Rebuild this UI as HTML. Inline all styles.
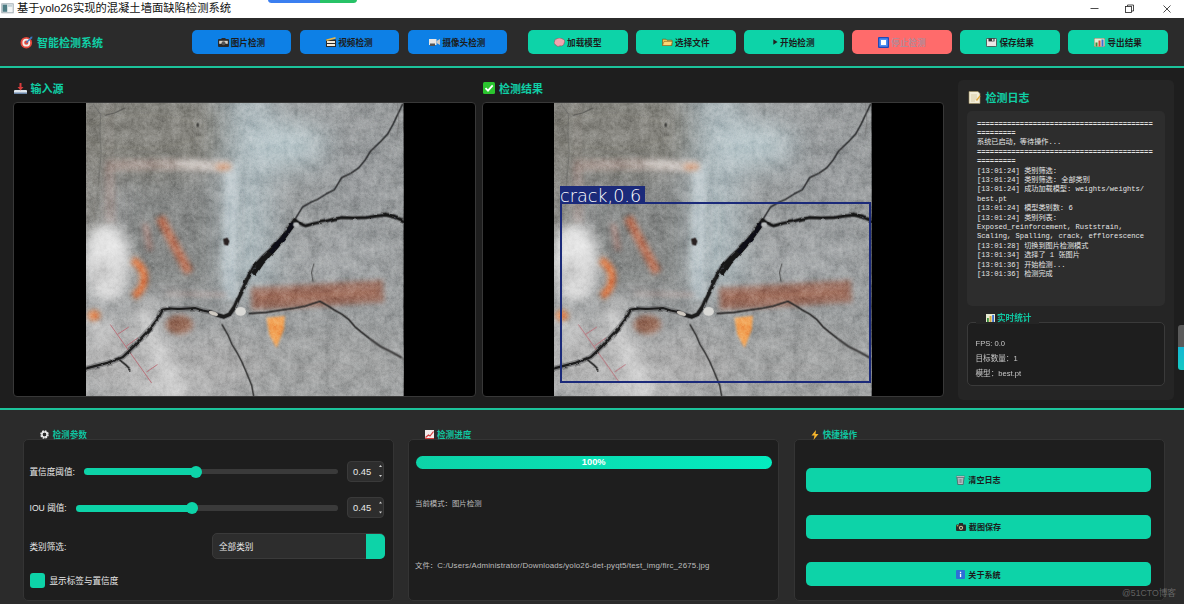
<!DOCTYPE html>
<html lang="zh-CN">
<head>
<meta charset="utf-8">
<title>基于yolo26实现的混凝土墙面缺陷检测系统</title>
<style>
*{box-sizing:border-box;margin:0;padding:0}
html,body{width:1184px;height:604px;overflow:hidden;background:#1e1e1e}
body{position:relative;font-family:"Liberation Sans","Noto Sans CJK SC",sans-serif;color:#e6e6e6}
.abs{position:absolute}
#titlebar{left:0;top:0;width:1184px;height:18px;background:#fff}
#titletext{left:17px;top:0;height:17px;line-height:17px;font-size:11.3px;color:#111;white-space:nowrap}
#header{left:0;top:18px;width:1184px;height:48px;background:#2b2b2b}
.tline{left:0;width:1184px;height:2px;background:#1cc39b}
#logo{left:37px;top:34px;height:19px;line-height:19px;font-size:11px;font-weight:bold;color:#10cfa6;white-space:nowrap}
.btn{top:30px;height:24px;width:99.600px;border-radius:5px;background:#0dd3a8;color:#1c1c1c;font-size:8.6px;font-weight:bold;
 display:flex;align-items:center;justify-content:center;white-space:nowrap}
.btn.blue{background:#0d80e6}
.btn.red{background:#ff6b6b;color:#b48a98}
.btn svg{margin-right:2px;flex:none}
.sec{height:16px;line-height:16px;font-size:11px;font-weight:bold;color:#10cfa6;white-space:nowrap}
.panel{top:102px;height:294.700px;background:#000;border-radius:4px;overflow:hidden;border:1px solid #383838}
#bottom{left:0;top:408px;width:1184px;height:196px;background:#2b2b2b}
.grp{top:439px;height:162px;background:#1e1e1e;border:1px solid #343434;border-radius:5px}
.gtitle{height:12px;line-height:12px;font-size:8.6px;font-weight:bold;color:#10c5a0;white-space:nowrap}
.lbl{font-size:8.6px;color:#e8e8e8;white-space:nowrap;height:12px;line-height:12px}
.small{font-size:7.4px;color:#bdbdbd;white-space:nowrap;height:12px;line-height:12px}
.track{height:5.600px;border-radius:2.800px;background:#3a3a3a;margin-top:0.700px}
.fill{height:7px;border-radius:3.5px;background:#0dd3a8}
.knob{width:12px;height:12px;border-radius:6px;background:#0dd3a8}
.spin{width:37px;height:21px;border-radius:4px;background:#2d2d2d;border:1px solid #3a3a3a;font-size:9.400px;color:#e8e8e8;line-height:20px;padding-left:5px}
.qbtn{left:806px;width:345px;height:24px;border-radius:5px;background:#0dd3a8;color:#1c1c1c;font-size:8.1px;font-weight:bold;
 display:flex;align-items:center;justify-content:center;white-space:nowrap}
.qbtn svg{margin-right:3px;flex:none}
#log{left:967px;top:111px;width:198px;height:195px;background:#2d2d2d;border-radius:5px;
 font-family:"Liberation Mono","Noto Sans CJK SC",monospace;font-size:7.15px;line-height:9.4px;color:#e6e6e6;
 padding:8.500px 0 0 10px;white-space:pre;overflow:hidden}
</style>
</head>
<body>
<!-- window title bar -->
<div id="titlebar" class="abs"></div>
<svg class="abs" style="left:1px;top:3px" width="13" height="11" viewBox="0 0 13 11"><rect x="0.800" y="0.800" width="11.400" height="9" fill="#f3f6f7" stroke="#9aa7ad" stroke-width="0.900"/><rect x="1.600" y="1.600" width="4.600" height="7.200" fill="#4d7c84"/><rect x="6.800" y="1.600" width="4.600" height="2.200" fill="#c5d3d8"/></svg>
<div id="titletext" class="abs">基于yolo26实现的混凝土墙面缺陷检测系统</div>
<div class="abs" style="left:268px;top:-4px;width:89px;height:7px;border-radius:4px;background:linear-gradient(90deg,#3b7ff0 0,#3b7ff0 58%,#27c267 58%)"></div>
<svg class="abs" style="left:1088px;top:3px" width="88" height="12" viewBox="0 0 88 12" fill="none" stroke="#2a2a2a" stroke-width="0.850"><path d="M2.500 5.500h8"/><rect x="37.5" y="3.5" width="6" height="6"/><path d="M39.5 3.5v-1.5h6v6h-2"/><path d="M75.500 2.500l7 7m0-7l-7 7"/></svg>

<!-- header -->
<div id="header" class="abs"></div>
<div class="abs tline" style="top:66px"></div>
<svg class="abs" style="left:20px;top:36px" width="13" height="13" viewBox="0 0 13 13"><circle cx="6.300" cy="6.700" r="5.800" fill="#e5483c"/><circle cx="6.300" cy="6.700" r="3.900" fill="#f3efe9"/><circle cx="6.300" cy="6.700" r="2.100" fill="#e5483c"/><path d="M6.300 6.700L11.500 1.500" stroke="#3a78c2" stroke-width="1.400"/><path d="M10 1l2.500 -0.500l-0.500 2.500z" fill="#3a78c2"/></svg>
<div id="logo" class="abs">智能检测系统</div>

<div class="abs btn blue" style="left:191.600px"><svg width="11" height="9" viewBox="0 0 11 9"><rect x="0" y="1" width="11" height="8" rx="1" fill="#2a2a2a"/><rect x="1.200" y="2.800" width="8.600" height="3" fill="#d9d2c6"/><circle cx="5.500" cy="5.200" r="2" fill="#555"/><rect x="3.500" y="0" width="4" height="1.500" fill="#2a2a2a"/></svg>图片检测</div>
<div class="abs btn blue" style="left:299.600px"><svg width="10" height="10" viewBox="0 0 10 10"><rect x="0" y="2.500" width="10" height="7.500" fill="#2a2a2a"/><rect x="1" y="4" width="8" height="2" fill="#f1e9d8"/><rect x="1" y="7" width="8" height="2" fill="#f1e9d8"/><path d="M0 2.500L9.500 0v1.800L0.500 4z" fill="#e8b84a"/></svg>视频检测</div>
<div class="abs btn blue" style="left:407.600px"><svg width="11" height="8" viewBox="0 0 11 8"><path d="M0 1h7.500v6H0z" fill="#e9e6e2"/><path d="M7.500 3L11 1v6L7.500 5z" fill="#cfcac4"/><rect x="1" y="5.500" width="5" height="2.500" fill="#555"/></svg>摄像头检测</div>
<div class="abs btn" style="left:528px"><svg width="11" height="9" viewBox="0 0 11 9"><path d="M2.500 1C4 -0.300 7 -0.300 8.500 1C10.500 1.300 11.300 3.500 10.200 5C10 7 8 8.500 6 7.800C4.500 9 2.500 8.300 2 7C0 6.500 -0.500 4 0.800 3C0.500 2 1.300 1 2.500 1z" fill="#f2a3ae" stroke="#8c5560" stroke-width="0.600"/></svg>加载模型</div>
<div class="abs btn" style="left:636px"><svg width="11" height="8" viewBox="0 0 11 8"><path d="M0.500 1.200h3.500l1 1h5v5.300h-9.500z" fill="#f6c453" stroke="#7a5a1c" stroke-width="0.700"/><path d="M0.500 7.500l1.500-4h8.500l-1.500 4z" fill="#fbd774" stroke="#7a5a1c" stroke-width="0.500"/></svg>选择文件</div>
<div class="abs btn" style="left:744px"><svg width="5" height="6" viewBox="0 0 5 6"><path d="M0.300 0.300L4.600 3L0.300 5.700z" fill="#222"/></svg>开始检测</div>
<div class="abs btn red" style="left:852px"><svg width="11" height="11" viewBox="0 0 11 11"><rect x="0" y="0" width="11" height="11" rx="1" fill="#2148b8"/><rect x="1.300" y="1.300" width="8.400" height="8.400" fill="#4f8ef0"/><rect x="3" y="3" width="5" height="5" fill="#fff"/></svg>停止检测</div>
<div class="abs btn" style="left:960.400px"><svg width="11" height="9" viewBox="0 0 11 9"><rect x="0.400" y="0.400" width="10.200" height="8.200" rx="1" fill="#ebe6e6" stroke="#333" stroke-width="0.800"/><rect x="2.500" y="0.400" width="6" height="3" fill="#333"/><rect x="6" y="0.900" width="1.500" height="2" fill="#ddd"/></svg>保存结果</div>
<div class="abs btn" style="left:1068.400px"><svg width="11" height="9" viewBox="0 0 11 9"><rect x="0" y="0" width="11" height="9" fill="#e6ead2" stroke="#5a6a4a" stroke-width="0.800"/><rect x="1.500" y="4.500" width="2" height="4" fill="#3d8f3d"/><rect x="4.500" y="2.500" width="2" height="6" fill="#d9483a"/><rect x="7.500" y="1.500" width="2" height="7" fill="#3c6fd0"/></svg>导出结果</div>

<!-- section labels -->
<svg class="abs" style="left:14px;top:82px" width="13" height="12" viewBox="0 0 13 12"><rect x="0" y="8" width="13" height="4" rx="1" fill="#dfe6ee"/><rect x="0" y="10.500" width="13" height="1.500" fill="#6b86a8"/><path d="M5.500 1h2v4h2L6.500 8.500L3.500 5h2z" fill="#d63c3c"/></svg>
<div class="abs sec" style="left:30.500px;top:80.500px">输入源</div>
<svg class="abs" style="left:483px;top:82px" width="12" height="12" viewBox="0 0 12 12"><rect width="12" height="12" rx="1.500" fill="#2bc52f"/><path d="M2.500 6.200L5 8.700L9.700 3.300" stroke="#fff" stroke-width="1.800" fill="none"/></svg>
<div class="abs sec" style="left:499px;top:80.500px">检测结果</div>

<!-- image panels -->
<div class="abs panel" id="p1" style="left:13px;width:463px"><svg class="abs" style="left:72px;top:-1px" width="317.500" height="294.200" viewBox="0 0 653 604" preserveAspectRatio="none"><filter id="b30" x="-30%" y="-30%" width="160%" height="160%"><feGaussianBlur stdDeviation="28"/></filter>
<filter id="b14" x="-30%" y="-30%" width="160%" height="160%"><feGaussianBlur stdDeviation="13"/></filter>
<filter id="b6" x="-30%" y="-30%" width="160%" height="160%"><feGaussianBlur stdDeviation="6"/></filter>
<filter id="b3" x="-30%" y="-30%" width="160%" height="160%"><feGaussianBlur stdDeviation="2.600"/></filter>
<filter id="b1" x="-10%" y="-10%" width="120%" height="120%"><feGaussianBlur stdDeviation="1"/></filter>
<filter id="nzf" color-interpolation-filters="sRGB" x="0" y="0" width="100%" height="100%"><feTurbulence type="fractalNoise" baseFrequency="0.9" numOctaves="2" seed="7"/><feColorMatrix type="matrix" values="0 0 0 1.6 -0.300  0 0 0 1.6 -0.300  0 0 0 1.6 -0.300  0 0 0 0 1"/></filter>
<filter id="nzc" color-interpolation-filters="sRGB" x="0" y="0" width="100%" height="100%"><feTurbulence type="fractalNoise" baseFrequency="0.035" numOctaves="3" seed="11"/><feColorMatrix type="matrix" values="0 0 0 1.5 -0.250  0 0 0 1.5 -0.250  0 0 0 1.5 -0.250  0 0 0 0 1"/></filter>
<filter id="nzm" color-interpolation-filters="sRGB" x="0" y="0" width="100%" height="100%"><feTurbulence type="fractalNoise" baseFrequency="0.14" numOctaves="2" seed="23"/><feColorMatrix type="matrix" values="0 0 0 1.5 -0.250  0 0 0 1.5 -0.250  0 0 0 1.5 -0.250  0 0 0 0 1"/></filter>
<filter id="rough" x="-5%" y="-5%" width="110%" height="110%"><feTurbulence type="fractalNoise" baseFrequency="0.05" numOctaves="2" seed="4" result="t"/><feDisplacementMap in="SourceGraphic" in2="t" scale="6" xChannelSelector="R" yChannelSelector="G"/></filter>
<rect width="653" height="604" fill="#9b9e9f"/>
<g filter="url(#b30)">
<ellipse cx="120" cy="60" rx="210" ry="100" fill="#86857f"/>
<rect x="-20" y="-20" width="58" height="300" fill="#85837d"/>
<rect x="285" y="-30" width="100" height="420" fill="#aebabe"/>
<ellipse cx="413" cy="88" rx="85" ry="48" fill="#bccbcf"/>
<rect x="75" y="165" width="195" height="225" fill="#858786"/>
<ellipse cx="560" cy="160" rx="90" ry="120" fill="#999c9e"/>
<ellipse cx="520" cy="330" rx="120" ry="60" fill="#a4a7a9"/>
<ellipse cx="480" cy="545" rx="200" ry="80" fill="#a3a4a4"/>
<ellipse cx="250" cy="545" rx="110" ry="75" fill="#adadad"/>
<ellipse cx="85" cy="530" rx="120" ry="85" fill="#b6b6b6"/>
<ellipse cx="170" cy="610" rx="60" ry="50" fill="#c6c6c6"/>
</g>
<g filter="url(#b14)">
</g><g filter="url(#b6)">
<path d="M40 130 L180 128 L300 133" stroke="#c4aca4" stroke-width="24" fill="none" opacity="0.5"/>
<path d="M185 127 L300 133" stroke="#dedad6" stroke-width="20" fill="none" opacity="0.7"/>
<path d="M300 128 L297 250 L294 330 L298 405" stroke="#c8d3d7" stroke-width="30" fill="none" opacity="0.7"/>
<path d="M48 135 L50 250" stroke="#b8a29c" stroke-width="22" fill="none" opacity="0.45"/>
<path d="M165 393 L290 396" stroke="#c2aca5" stroke-width="9" fill="none" opacity="0.55"/>
</g><g filter="url(#b14)">
<ellipse cx="44" cy="332" rx="50" ry="84" fill="#dadada"/>
<ellipse cx="40" cy="290" rx="36" ry="40" fill="#e8e8e8" opacity="0.85"/><ellipse cx="28" cy="352" rx="16" ry="20" fill="#b0b0b0" opacity="0.7"/>
<path d="M0 450 L50 480" stroke="#d0d0d0" stroke-width="50" fill="none" opacity="0.7"/><path d="M110 410 L150 520 L185 604" stroke="#d6d6d6" stroke-width="40" fill="none" opacity="0.75"/>
<path d="M100 430 L190 380" stroke="#b5b5b5" stroke-width="30" fill="none" opacity="0.6"/>
</g>
<g filter="url(#b6)">
<path d="M340 404 L470 397 L612 388" stroke="#98634f" stroke-width="46" fill="none" opacity="0.8"/>
<path d="M350 402 L600 390" stroke="#aa7560" stroke-width="18" fill="none" opacity="0.55"/>
<ellipse cx="192" cy="457" rx="28" ry="20" fill="#97634d" opacity="0.85"/>
<path d="M152 236 L180 290 L212 350" stroke="#c97b5c" stroke-width="19" fill="none" opacity="0.88"/>
<path d="M122 250 L132 305" stroke="#b98f85" stroke-width="12" fill="none" opacity="0.7"/>
<path d="M96 324 Q128 345 116 378 Q110 392 98 398" stroke="#e37c45" stroke-width="15" fill="none"/>
<ellipse cx="16" cy="438" rx="13" ry="11" fill="#e28a55"/>
<ellipse cx="283" cy="133" rx="17" ry="8" fill="#dba27e" opacity="0.75"/>
</g>
<g filter="url(#b3)">
<path d="M371 443 L409 439 L407 467 L392 505 L377 478 Z" fill="#f2a558"/>
</g>
<rect width="653" height="604" filter="url(#nzc)" opacity="0.32" style="mix-blend-mode:soft-light"/>
<rect width="653" height="604" filter="url(#nzm)" opacity="0.2" style="mix-blend-mode:soft-light"/>
<rect width="653" height="604" filter="url(#nzf)" opacity="0.16" style="mix-blend-mode:soft-light"/>
<g stroke="#b96a74" stroke-width="2" fill="none" opacity="0.9"><path d="M50 457 L135 577"/><path d="M65 477 L88 462"/><path d="M82 502 L107 484"/><path d="M125 554 L147 539"/></g>
<g fill="none" stroke-linejoin="round" stroke-linecap="round" filter="url(#b1)">
<polyline points="429,242 446,215 462,206 476,200 495,188 511,180 520,165 526,155 545,146 561,135 575,118 586,100 605,82 621,65 632,45 639,30 651,5" stroke="#2c2d2f" stroke-width="3.200"/>
<polyline points="336,434 370,432 401,427 430,423 451,419 481,409 497,418 511,427 527,436 541,447 553,461 566,472 585,487 606,502 628,513 648,524" stroke="#262525" stroke-width="3.300"/>
<polyline points="585,487 606,502 628,513 653,527" stroke="#555" stroke-width="6" opacity="0.5"/>
<polyline points="280,457 292,478 300,497 311,515 320,532 330,555 341,582 345,604" stroke="#2e2e2e" stroke-width="3"/>
<polyline points="469,332 464,350 467,368" stroke="#4a4a4a" stroke-width="2"/>
<polyline points="15,5 30,25 28,65 31,100 26,165" stroke="#6a6a66" stroke-width="2" opacity="0.8"/>
<polyline points="40,27 60,22 80,12" stroke="#555552" stroke-width="2.200" opacity="0.8"/>
<polyline points="640,0 644,40 640,70" stroke="#6a6a6a" stroke-width="2" opacity="0.6"/>
</g>
<g fill="none" stroke-linejoin="round" stroke-linecap="round" filter="url(#rough)">
<polyline points="0,547 22,541 50,534 75,524 88,512 100,500 112,486 125,472 138,457 150,442 158,426 172,424 190,425 210,424 225,423 240,428 255,431 270,437 283,441 295,436 306,420 314,402 326,377 336,355 346,337 362,320 381,302 396,286 411,268 420,254 429,242" stroke="#4a4a4c" stroke-width="11" opacity="0.45"/>
<polyline points="0,547 22,541 50,534 75,524 88,512 100,500 112,486 125,472 138,457 150,442 158,426 172,424" stroke="#1c1c1d" stroke-width="4.800"/>
<polyline points="172,424 190,425 210,424 225,423 240,428 255,431" stroke="#1c1c1d" stroke-width="4"/>
<polyline points="255,431 270,437 283,441 295,436 306,420 314,402 326,377 336,355" stroke="#1a1a1b" stroke-width="7.500"/>
<polyline points="336,355 346,337 362,320 381,302 396,286 411,268 420,254 429,242" stroke="#141415" stroke-width="6"/>
<path d="M376 309 L394 285 L411 263 L424 245 L431 242 L433 250 L424 262 L411 280 L396 299 L382 315 Z" fill="#111112"/>
<path d="M342 350 L360 322 L376 308 L382 314 L366 332 L349 357 Z" fill="#151516"/>
<polyline points="429,242 440,250 452,254 470,249 491,245 510,240 526,237 550,238 576,237 598,234 616,232 634,236 653,244" stroke="#4a4a4c" stroke-width="9" opacity="0.4"/>
<polyline points="429,242 440,250 452,254 470,249 491,245 510,240 526,237 550,238 576,237 598,234 616,232 634,236 653,244" stroke="#151516" stroke-width="5.500"/>
<polyline points="70,530 82,540 92,550" stroke="#1c1c1c" stroke-width="3.500"/>
</g>
<g filter="url(#b1)">
<ellipse cx="318" cy="430" rx="11" ry="9" fill="#d9d9d6"/>
<ellipse cx="262" cy="434" rx="10" ry="4" fill="#cfcac2" transform="rotate(20 262 434)"/>
<ellipse cx="432" cy="252" rx="6" ry="5" fill="#b9bcbd"/>
<path d="M282 281 l9 -3 l4 8 l-3 9 l-8 -2 z" fill="#2a2322"/>
<ellipse cx="230" cy="47" rx="2.500" ry="4.500" fill="#3a3a38"/>
</g></svg></div>
<div class="abs panel" id="p2" style="left:482px;width:462px"><svg class="abs" style="left:71px;top:-1px" width="317.500" height="294.200" viewBox="0 0 653 604" preserveAspectRatio="none"><rect width="653" height="604" fill="#9b9e9f"/>
<g filter="url(#b30)">
<ellipse cx="120" cy="60" rx="210" ry="100" fill="#86857f"/>
<rect x="-20" y="-20" width="58" height="300" fill="#85837d"/>
<rect x="285" y="-30" width="100" height="420" fill="#aebabe"/>
<ellipse cx="413" cy="88" rx="85" ry="48" fill="#bccbcf"/>
<rect x="75" y="165" width="195" height="225" fill="#858786"/>
<ellipse cx="560" cy="160" rx="90" ry="120" fill="#999c9e"/>
<ellipse cx="520" cy="330" rx="120" ry="60" fill="#a4a7a9"/>
<ellipse cx="480" cy="545" rx="200" ry="80" fill="#a3a4a4"/>
<ellipse cx="250" cy="545" rx="110" ry="75" fill="#adadad"/>
<ellipse cx="85" cy="530" rx="120" ry="85" fill="#b6b6b6"/>
<ellipse cx="170" cy="610" rx="60" ry="50" fill="#c6c6c6"/>
</g>
<g filter="url(#b14)">
</g><g filter="url(#b6)">
<path d="M40 130 L180 128 L300 133" stroke="#c4aca4" stroke-width="24" fill="none" opacity="0.5"/>
<path d="M185 127 L300 133" stroke="#dedad6" stroke-width="20" fill="none" opacity="0.7"/>
<path d="M300 128 L297 250 L294 330 L298 405" stroke="#c8d3d7" stroke-width="30" fill="none" opacity="0.7"/>
<path d="M48 135 L50 250" stroke="#b8a29c" stroke-width="22" fill="none" opacity="0.45"/>
<path d="M165 393 L290 396" stroke="#c2aca5" stroke-width="9" fill="none" opacity="0.55"/>
</g><g filter="url(#b14)">
<ellipse cx="44" cy="332" rx="50" ry="84" fill="#dadada"/>
<ellipse cx="40" cy="290" rx="36" ry="40" fill="#e8e8e8" opacity="0.85"/><ellipse cx="28" cy="352" rx="16" ry="20" fill="#b0b0b0" opacity="0.7"/>
<path d="M0 450 L50 480" stroke="#d0d0d0" stroke-width="50" fill="none" opacity="0.7"/><path d="M110 410 L150 520 L185 604" stroke="#d6d6d6" stroke-width="40" fill="none" opacity="0.75"/>
<path d="M100 430 L190 380" stroke="#b5b5b5" stroke-width="30" fill="none" opacity="0.6"/>
</g>
<g filter="url(#b6)">
<path d="M340 404 L470 397 L612 388" stroke="#98634f" stroke-width="46" fill="none" opacity="0.8"/>
<path d="M350 402 L600 390" stroke="#aa7560" stroke-width="18" fill="none" opacity="0.55"/>
<ellipse cx="192" cy="457" rx="28" ry="20" fill="#97634d" opacity="0.85"/>
<path d="M152 236 L180 290 L212 350" stroke="#c97b5c" stroke-width="19" fill="none" opacity="0.88"/>
<path d="M122 250 L132 305" stroke="#b98f85" stroke-width="12" fill="none" opacity="0.7"/>
<path d="M96 324 Q128 345 116 378 Q110 392 98 398" stroke="#e37c45" stroke-width="15" fill="none"/>
<ellipse cx="16" cy="438" rx="13" ry="11" fill="#e28a55"/>
<ellipse cx="283" cy="133" rx="17" ry="8" fill="#dba27e" opacity="0.75"/>
</g>
<g filter="url(#b3)">
<path d="M371 443 L409 439 L407 467 L392 505 L377 478 Z" fill="#f2a558"/>
</g>
<rect width="653" height="604" filter="url(#nzc)" opacity="0.32" style="mix-blend-mode:soft-light"/>
<rect width="653" height="604" filter="url(#nzm)" opacity="0.2" style="mix-blend-mode:soft-light"/>
<rect width="653" height="604" filter="url(#nzf)" opacity="0.16" style="mix-blend-mode:soft-light"/>
<g stroke="#b96a74" stroke-width="2" fill="none" opacity="0.9"><path d="M50 457 L135 577"/><path d="M65 477 L88 462"/><path d="M82 502 L107 484"/><path d="M125 554 L147 539"/></g>
<g fill="none" stroke-linejoin="round" stroke-linecap="round" filter="url(#b1)">
<polyline points="429,242 446,215 462,206 476,200 495,188 511,180 520,165 526,155 545,146 561,135 575,118 586,100 605,82 621,65 632,45 639,30 651,5" stroke="#2c2d2f" stroke-width="3.200"/>
<polyline points="336,434 370,432 401,427 430,423 451,419 481,409 497,418 511,427 527,436 541,447 553,461 566,472 585,487 606,502 628,513 648,524" stroke="#262525" stroke-width="3.300"/>
<polyline points="585,487 606,502 628,513 653,527" stroke="#555" stroke-width="6" opacity="0.5"/>
<polyline points="280,457 292,478 300,497 311,515 320,532 330,555 341,582 345,604" stroke="#2e2e2e" stroke-width="3"/>
<polyline points="469,332 464,350 467,368" stroke="#4a4a4a" stroke-width="2"/>
<polyline points="15,5 30,25 28,65 31,100 26,165" stroke="#6a6a66" stroke-width="2" opacity="0.8"/>
<polyline points="40,27 60,22 80,12" stroke="#555552" stroke-width="2.200" opacity="0.8"/>
<polyline points="640,0 644,40 640,70" stroke="#6a6a6a" stroke-width="2" opacity="0.6"/>
</g>
<g fill="none" stroke-linejoin="round" stroke-linecap="round" filter="url(#rough)">
<polyline points="0,547 22,541 50,534 75,524 88,512 100,500 112,486 125,472 138,457 150,442 158,426 172,424 190,425 210,424 225,423 240,428 255,431 270,437 283,441 295,436 306,420 314,402 326,377 336,355 346,337 362,320 381,302 396,286 411,268 420,254 429,242" stroke="#4a4a4c" stroke-width="11" opacity="0.45"/>
<polyline points="0,547 22,541 50,534 75,524 88,512 100,500 112,486 125,472 138,457 150,442 158,426 172,424" stroke="#1c1c1d" stroke-width="4.800"/>
<polyline points="172,424 190,425 210,424 225,423 240,428 255,431" stroke="#1c1c1d" stroke-width="4"/>
<polyline points="255,431 270,437 283,441 295,436 306,420 314,402 326,377 336,355" stroke="#1a1a1b" stroke-width="7.500"/>
<polyline points="336,355 346,337 362,320 381,302 396,286 411,268 420,254 429,242" stroke="#141415" stroke-width="6"/>
<path d="M376 309 L394 285 L411 263 L424 245 L431 242 L433 250 L424 262 L411 280 L396 299 L382 315 Z" fill="#111112"/>
<path d="M342 350 L360 322 L376 308 L382 314 L366 332 L349 357 Z" fill="#151516"/>
<polyline points="429,242 440,250 452,254 470,249 491,245 510,240 526,237 550,238 576,237 598,234 616,232 634,236 653,244" stroke="#4a4a4c" stroke-width="9" opacity="0.4"/>
<polyline points="429,242 440,250 452,254 470,249 491,245 510,240 526,237 550,238 576,237 598,234 616,232 634,236 653,244" stroke="#151516" stroke-width="5.500"/>
<polyline points="70,530 82,540 92,550" stroke="#1c1c1c" stroke-width="3.500"/>
</g>
<g filter="url(#b1)">
<ellipse cx="318" cy="430" rx="11" ry="9" fill="#d9d9d6"/>
<ellipse cx="262" cy="434" rx="10" ry="4" fill="#cfcac2" transform="rotate(20 262 434)"/>
<ellipse cx="432" cy="252" rx="6" ry="5" fill="#b9bcbd"/>
<path d="M282 281 l9 -3 l4 8 l-3 9 l-8 -2 z" fill="#2a2322"/>
<ellipse cx="230" cy="47" rx="2.500" ry="4.500" fill="#3a3a38"/>
</g></svg><div class="abs" style="left:76.500px;top:99px;width:311.500px;height:180.500px;border:2px solid #1b2a7a"></div><div class="abs" style="left:76.500px;top:83px;width:85px;height:18px;background:#1b2a7a;color:#fff;font-family:'DejaVu Sans Light','DejaVu Sans',sans-serif;font-weight:200;font-size:17.600px;line-height:20.500px;padding-left:0.500px;white-space:nowrap;overflow:hidden">crack,0.6</div></div>

<!-- right panel -->
<div class="abs" style="left:957.500px;top:80px;width:216.500px;height:319.500px;background:#252525;border-radius:5px"></div>
<svg class="abs" style="left:968px;top:91px" width="13" height="13" viewBox="0 0 13 13"><path d="M1 0.500h9l2 2v10H1z" fill="#f3edd8" stroke="#9a8a5a" stroke-width="0.600"/><path d="M3 4h6M3 6h6M3 8h6M3 10h4" stroke="#c9b98a" stroke-width="0.600"/><path d="M8 9l3.500-4.500l1 0.800L9 10z" fill="#e2a83a"/></svg>
<div class="abs sec" style="left:985.500px;top:89.500px">检测日志</div>
<div id="log" class="abs"><b>=========================================
=========</b>
系统已启动，等待操作...
<b>=========================================
=========</b>
[13:01:24] 类别筛选:
[13:01:24] 类别筛选: 全部类别
[13:01:24] 成功加载模型: weights/weights/
best.pt
[13:01:24] 模型类别数: 6
[13:01:24] 类别列表:
Exposed_reinforcement, Ruststrain,
Scaling, Spalling, crack, efflorescence
[13:01:28] 切换到图片检测模式
[13:01:34] 选择了 1 张图片
[13:01:36] 开始检测...
[13:01:36] 检测完成</div>
<div class="abs" style="left:967px;top:322px;width:198px;height:64px;background:#1e1e1e;border:1px solid #3a3a3a;border-radius:5px"></div>
<div class="abs" style="left:976px;top:312px;width:63px;height:12px;background:#252525"></div>
<svg class="abs" style="left:985.500px;top:313.500px" width="9" height="8" viewBox="0 0 9 8"><rect width="9" height="8" fill="#e6ead2"/><rect x="1" y="4" width="1.800" height="4" fill="#3d8f3d"/><rect x="3.600" y="2" width="1.800" height="6" fill="#d9a83a"/><rect x="6.200" y="1" width="1.800" height="7" fill="#3c6fd0"/></svg>
<div class="abs gtitle" style="left:997px;top:312px">实时统计</div>
<div class="abs small" style="left:975.500px;top:338px;color:#c8c8c8;font-size:7.6px">FPS: 0.0</div>
<div class="abs small" style="left:975.500px;top:352.800px;color:#c8c8c8;font-size:7.6px">目标数量：1</div>
<div class="abs small" style="left:975.500px;top:367.700px;color:#c8c8c8;font-size:7.6px">模型：best.pt</div>
<div class="abs" style="left:1178px;top:325px;width:6px;height:45px;border-radius:3px 0 0 3px;background:linear-gradient(180deg,#5a5a5a 0,#5a5a5a 50%,#14b8d4 50%,#14c9c2 100%)"></div>

<!-- bottom area -->
<div id="bottom" class="abs"></div>
<div class="abs tline" style="top:408px"></div>

<div class="abs grp" style="left:23px;width:371px"></div>
<div class="abs grp" style="left:408px;width:371px"></div>
<div class="abs grp" style="left:794px;width:371px"></div>

<!-- group 1 -->
<svg class="abs" style="left:40px;top:430px" width="9" height="9" viewBox="0 0 9 9"><circle cx="4.500" cy="4.500" r="3.200" fill="none" stroke="#e8e8e8" stroke-width="2.200" stroke-dasharray="1.600 0.900"/><circle cx="4.500" cy="4.500" r="2.600" fill="none" stroke="#e8e8e8" stroke-width="1.400"/></svg>
<div class="abs gtitle" style="left:52.500px;top:428.500px">检测参数</div>
<div class="abs lbl" style="left:29.500px;top:465.500px">置信度阈值:</div>
<div class="abs track" style="left:84px;top:468px;width:254px"></div>
<div class="abs fill" style="left:84px;top:468px;width:114px"></div>
<div class="abs knob" style="left:190px;top:465.500px"></div>
<div class="abs spin" style="left:347px;top:460.500px">0.45</div>
<div class="abs lbl" style="left:29.500px;top:502px">IOU 阈值:</div>
<div class="abs track" style="left:76px;top:504.500px;width:262px"></div>
<div class="abs fill" style="left:76px;top:504.500px;width:118px"></div>
<div class="abs knob" style="left:186px;top:502px"></div>
<div class="abs spin" style="left:347px;top:497px">0.45</div>
<svg class="abs" style="left:378px;top:462px" width="5" height="54" viewBox="0 0 5 54" fill="#d0d0d0"><path d="M2.500 3l1.500 2h-3zM2.500 15l1.500-2h-3zM2.500 39.500l1.500 2h-3zM2.500 51.500l1.500-2h-3z"/></svg>
<div class="abs lbl" style="left:29.500px;top:540.500px">类别筛选:</div>
<div class="abs" style="left:212px;top:533px;width:173px;height:26px;border-radius:5px;background:#2d2d2d;border:1px solid #3a3a3a"></div>
<div class="abs" style="left:366px;top:533.500px;width:19px;height:25px;border-radius:0 5px 5px 0;background:#0dd3a8"></div>
<div class="abs lbl" style="left:219px;top:540.500px">全部类别</div>
<div class="abs" style="left:29.500px;top:572.500px;width:15.500px;height:15.500px;border-radius:3px;background:#0dd3a8"></div>
<div class="abs lbl" style="left:49.500px;top:575px">显示标签与置信度</div>

<!-- group 2 -->
<svg class="abs" style="left:425px;top:430px" width="9" height="9" viewBox="0 0 9 9"><rect width="9" height="9" fill="#f3ecec"/><path d="M0.500 7.500L3.500 5L5 6L8.500 1.500" stroke="#d03a3a" stroke-width="1.200" fill="none"/><path d="M0 8.500h9" stroke="#d03a3a" stroke-width="1"/></svg>
<div class="abs gtitle" style="left:437px;top:428.500px">检测进度</div>
<div class="abs" style="left:416px;top:456px;width:355.500px;height:13px;border-radius:6.500px;background:linear-gradient(90deg,#0dd3a8,#04ecc0)"></div>
<div class="abs" style="left:416px;top:456px;width:355.500px;height:13px;line-height:13.500px;text-align:center;font-size:9.300px;font-weight:bold;color:#fff">100%</div>
<div class="abs small" style="left:415px;top:497.700px">当前模式：图片检测</div>
<div class="abs small" style="left:415px;top:560.300px">文件：<span style="font-size:7.9px;letter-spacing:0.160px">C:/Users/Administrator/Downloads/yolo26-det-pyqt5/test_img/firc_2675.jpg</span></div>

<!-- group 3 -->
<svg class="abs" style="left:811px;top:429.500px" width="8" height="10" viewBox="0 0 8 10"><path d="M5 0L0.500 5.500h3L2.500 10L7.500 4h-3z" fill="#f7b52c"/></svg>
<div class="abs gtitle" style="left:822.700px;top:428.500px">快捷操作</div>
<div class="abs qbtn" style="top:467.500px"><svg width="9" height="10" viewBox="0 0 9 10"><path d="M1 2.500h7l-0.800 7H1.800z" fill="#b9c0c6" stroke="#4a4f55" stroke-width="0.700"/><rect x="0.300" y="1" width="8.400" height="1.600" rx="0.500" fill="#d6dbe0" stroke="#4a4f55" stroke-width="0.500"/><path d="M3.200 4v4M4.500 4v4M5.800 4v4" stroke="#70767c" stroke-width="0.600"/></svg>清空日志</div>
<div class="abs qbtn" style="top:514.500px"><svg width="10" height="8" viewBox="0 0 10 8"><rect x="0" y="1.500" width="10" height="6.500" rx="1" fill="#2a2a2a"/><rect x="3" y="0" width="4" height="2" fill="#2a2a2a"/><circle cx="5" cy="4.800" r="2.100" fill="#d8c89a"/><circle cx="5" cy="4.800" r="1.100" fill="#333"/><rect x="0.800" y="2.300" width="1.500" height="1" fill="#e8c04a"/></svg>截图保存</div>
<div class="abs qbtn" style="top:562px"><svg width="9" height="9" viewBox="0 0 9 9"><rect width="9" height="9" rx="1" fill="#2d6fd6"/><rect x="3.900" y="3.800" width="1.300" height="3.300" fill="#fff"/><rect x="3.900" y="1.800" width="1.300" height="1.300" fill="#fff"/></svg>关于系统</div>

<div class="abs" style="left:1122px;top:586px;height:14px;line-height:14px;font-size:8.7px;color:rgba(200,200,200,0.4);white-space:nowrap">@51CTO博客</div>
</body>
</html>
